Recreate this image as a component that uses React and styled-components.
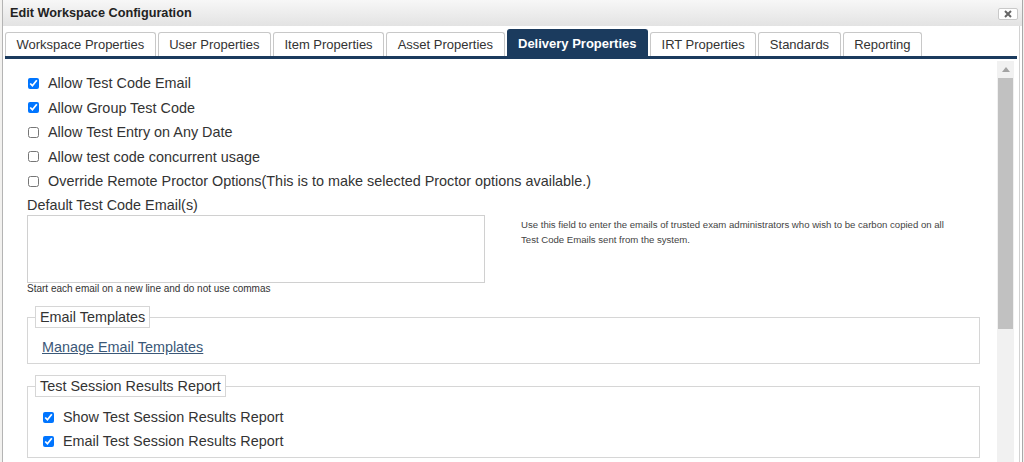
import React from 'react'
import styled, { createGlobalStyle } from 'styled-components'

const GlobalStyle = createGlobalStyle`
  html, body {
    margin: 0;
    padding: 0;
    height: 462px;
    overflow: hidden;
    background: #f2f1ef;
  }
  body {
    font-family: "Liberation Sans", Arial, sans-serif;
    color: #333;
  }
`

const Dialog = styled.div`
  margin-left: 2px;
  width: 1021px;
  height: 462px;
  box-sizing: border-box;
  border-left: 1px solid #b4b4b4;
  border-right: 1px solid #a9a9a9;
  background: #fff;
  display: flex;
  flex-direction: column;
`

const TitleBar = styled.div`
  height: 26px;
  flex: none;
  display: flex;
  align-items: center;
  justify-content: space-between;
  padding: 0 4px 0 7px;
  background: linear-gradient(#f7f7f7, #e3e3e3);
`

const Title = styled.div`
  font-size: 12.7px;
  font-weight: bold;
  color: #222;
`

const CloseButton = styled.button`
  width: 20px;
  height: 12px;
  padding: 0;
  margin-top: 1px;
  border: 1px solid #c9c9c9;
  border-radius: 2px;
  background: #fff;
  display: flex;
  align-items: center;
  justify-content: center;
`

const Body = styled.div`
  flex: 1;
  display: flex;
  flex-direction: column;
  margin-right: 2px;
  border-right: 1px solid #d2d2d2;
  min-height: 0;
`

const TabStrip = styled.div`
  flex: none;
  display: flex;
  align-items: flex-end;
  gap: 2px;
  height: 30px;
  margin: 0 2px 0 2px;
  border-bottom: 3px solid #1b3b5e;
`

const Tab = styled.div`
  height: ${p => (p.$active ? 27 : 24)}px;
  box-sizing: border-box;
  display: flex;
  align-items: center;
  padding: 0 10.5px;
  font-size: 13px;
  font-weight: ${p => (p.$active ? 'bold' : 'normal')};
  color: ${p => (p.$active ? '#fff' : '#333')};
  background: ${p => (p.$active ? '#1b3b5e' : '#fff')};
  border: 1px solid ${p => (p.$active ? '#1b3b5e' : '#c8c8c8')};
  border-bottom: none;
  border-radius: 3px 3px 0 0;
  white-space: nowrap;
`

const ContentRow = styled.div`
  flex: 1;
  display: flex;
  margin: 0 5px 0 3px;
  min-height: 0;
  overflow: hidden;
`

const Content = styled.div`
  flex: 1;
  padding: 12px 17px 0 21px;
`

const Scrollbar = styled.div`
  width: 17px;
  flex: none;
  margin-top: 2px;
  background: #f1f1f1;
  display: flex;
  flex-direction: column;
`

const ScrollArrow = styled.div`
  height: 17px;
  display: flex;
  align-items: center;
  justify-content: center;
`

const ScrollThumb = styled.div`
  height: 251px;
  margin: 0 1px;
  background: #c1c1c1;
`

const CheckRow = styled.label`
  display: flex;
  align-items: center;
  height: ${p => p.$h || 24.5}px;
  font-size: 14.4px;
  color: #333;
  white-space: nowrap;
`

const CheckBox = styled.input.attrs({ type: 'checkbox' })`
  width: 11px;
  height: 11px;
  margin: 0 9px 0 1px;
  flex: none;
`

const FieldLabel = styled.div`
  font-size: 14.4px;
  line-height: 20px;
  margin-top: 1.5px;
`

const EmailRow = styled.div`
  display: flex;
  align-items: flex-start;
`

const EmailColumn = styled.div`
  display: flex;
  flex-direction: column;
`

const TextArea = styled.textarea`
  display: block;
  width: 458px;
  height: 68px;
  box-sizing: border-box;
  margin: 0;
  border: 1px solid #d0d0d0;
  resize: none;
  font-family: inherit;
`

const Hint = styled.div`
  font-size: 10px;
  line-height: 12px;
  color: #333;
`

const SideNote = styled.div`
  width: 432px;
  margin-left: 36px;
  padding-top: 3px;
  font-size: 9.6px;
  line-height: 14.5px;
  color: #444;
`

const FieldSet = styled.fieldset`
  margin: 11px 0 0;
  padding: 0 7px;
  border: 1px solid #d6d6d6;
  min-width: 0;
`

const Legend = styled.legend`
  padding: 2px 4px;
  border: 1px solid #d6d6d6;
  font-size: 14.4px;
  line-height: 16px;
  color: #333;
`

const FieldBody = styled.div`
  padding: ${p => p.$pad};
`

const Link = styled.a`
  display: block;
  font-size: 14.4px;
  line-height: 20px;
  color: #3b5878;
  text-decoration: underline;
`

const mainOptions = [
  { label: 'Allow Test Code Email', checked: true },
  { label: 'Allow Group Test Code', checked: true },
  { label: 'Allow Test Entry on Any Date', checked: false },
  { label: 'Allow test code concurrent usage', checked: false },
  { label: 'Override Remote Proctor Options(This is to make selected Proctor options available.)', checked: false },
]

const tabs = [
  'Workspace Properties',
  'User Properties',
  'Item Properties',
  'Asset Properties',
  'Delivery Properties',
  'IRT Properties',
  'Standards',
  'Reporting',
]

const App = () => {
  return (
    <>
      <GlobalStyle />
      <Dialog>
        <TitleBar>
          <Title>Edit Workspace Configuration</Title>
          <CloseButton aria-label="close">
            <svg width="8" height="8" viewBox="0 0 8 8">
              <path d="M1 1L7 7M7 1L1 7" stroke="#666" strokeWidth="2" />
            </svg>
          </CloseButton>
        </TitleBar>
        <Body>
          <TabStrip>
            {tabs.map(t => (
              <Tab key={t} $active={t === 'Delivery Properties'}>{t}</Tab>
            ))}
          </TabStrip>
          <ContentRow>
            <Content>
              {mainOptions.map(o => (
                <CheckRow key={o.label}>
                  <CheckBox defaultChecked={o.checked} />
                  {o.label}
                </CheckRow>
              ))}
              <FieldLabel>Default Test Code Email(s)</FieldLabel>
              <EmailRow>
                <EmailColumn>
                  <TextArea />
                  <Hint>Start each email on a new line and do not use commas</Hint>
                </EmailColumn>
                <SideNote>
                  Use this field to enter the emails of trusted exam administrators who wish to be carbon copied on all Test Code Emails sent from the system.
                </SideNote>
              </EmailRow>
              <FieldSet>
                <Legend>Email Templates</Legend>
                <FieldBody $pad="9px 7px 6px">
                  <Link href="#">Manage Email Templates</Link>
                </FieldBody>
              </FieldSet>
              <FieldSet>
                <Legend>Test Session Results Report</Legend>
                <FieldBody $pad="8px 7px 4px">
                  <CheckRow $h={24}>
                    <CheckBox defaultChecked />
                    Show Test Session Results Report
                  </CheckRow>
                  <CheckRow $h={24}>
                    <CheckBox defaultChecked />
                    Email Test Session Results Report
                  </CheckRow>
                </FieldBody>
              </FieldSet>
            </Content>
            <Scrollbar>
              <ScrollArrow>
                <svg width="8" height="5" viewBox="0 0 8 5">
                  <path d="M0 5L4 0L8 5Z" fill="#a3a3a3" />
                </svg>
              </ScrollArrow>
              <ScrollThumb />
            </Scrollbar>
          </ContentRow>
        </Body>
      </Dialog>
    </>
  )
}

export default App
